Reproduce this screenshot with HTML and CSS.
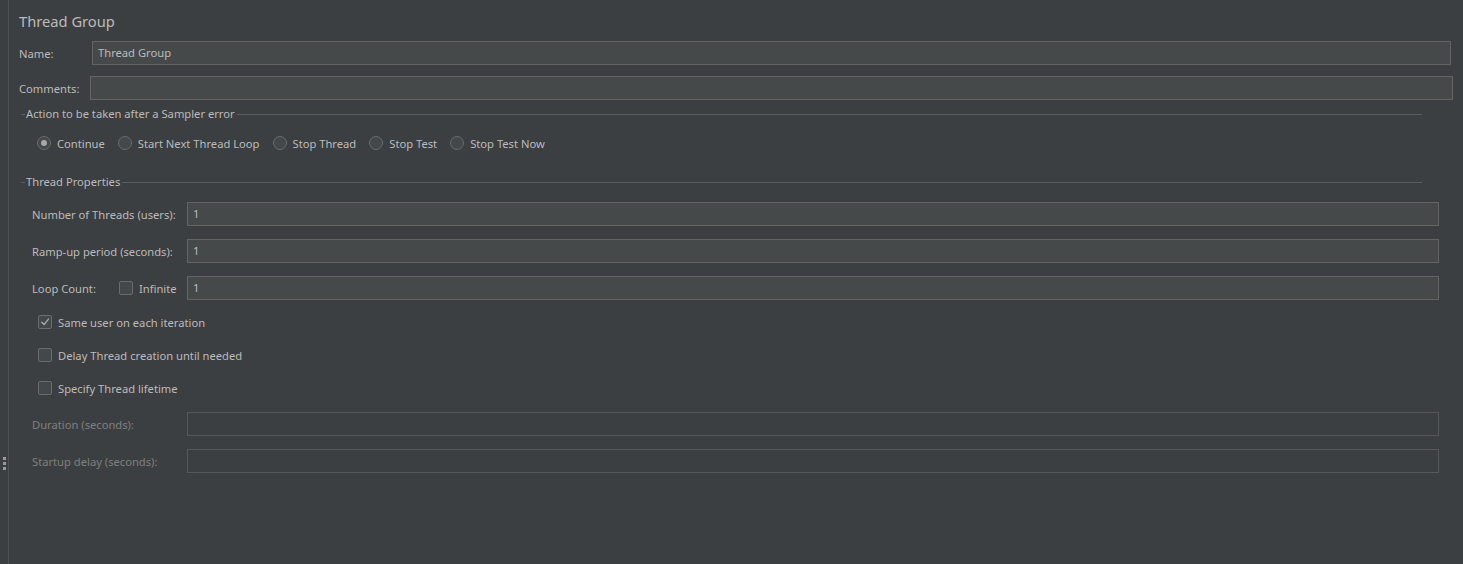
FILE: index.html
```html
<!DOCTYPE html>
<html lang="en">
<head>
<meta charset="utf-8">
<title>Thread Group</title>
<link rel="stylesheet" href="styles.css">
</head>
<body>
<div class="app">
  <div class="gutter">
    <div class="grip"><span></span><span></span><span></span></div>
  </div>
  <main class="panel">
    <h1 class="title">Thread Group</h1>

    <div class="row row-name">
      <label class="lbl lbl-name">Name:</label>
      <div class="field">Thread Group</div>
    </div>
    <div class="row row-comments">
      <label class="lbl lbl-comments">Comments:</label>
      <div class="field"></div>
    </div>

    <section class="group group-action">
      <div class="legend"><span class="tick"></span><span class="legend-text">Action to be taken after a Sampler error</span><span class="rule"></span></div>
      <div class="radios">
        <span class="opt"><span class="radio on"></span>Continue</span>
        <span class="opt"><span class="radio"></span>Start Next Thread Loop</span>
        <span class="opt"><span class="radio"></span>Stop Thread</span>
        <span class="opt"><span class="radio"></span>Stop Test</span>
        <span class="opt"><span class="radio"></span>Stop Test Now</span>
      </div>
    </section>

    <section class="group group-props">
      <div class="legend"><span class="tick"></span><span class="legend-text">Thread Properties</span><span class="rule"></span></div>

      <div class="prop">
        <label class="plabel">Number of Threads (users):</label>
        <div class="field">1</div>
      </div>
      <div class="prop">
        <label class="plabel">Ramp-up period (seconds):</label>
        <div class="field">1</div>
      </div>
      <div class="prop">
        <div class="plabel loop">
          <span class="loop-text">Loop Count:</span>
          <span class="check-opt"><span class="check"></span>Infinite</span>
        </div>
        <div class="field">1</div>
      </div>

      <div class="checks">
        <div class="check-opt"><span class="check on"><svg viewBox="0 0 14 14" width="14" height="14"><path d="M3.2 7.2 L6 10 L11 3.6" fill="none" stroke="#a8a8a8" stroke-width="1.6" stroke-linecap="round" stroke-linejoin="round"/></svg></span>Same user on each iteration</div>
        <div class="check-opt"><span class="check"></span>Delay Thread creation until needed</div>
        <div class="check-opt"><span class="check"></span>Specify Thread lifetime</div>
      </div>

      <div class="prop disabled first-disabled">
        <label class="plabel">Duration (seconds):</label>
        <div class="field"></div>
      </div>
      <div class="prop disabled">
        <label class="plabel">Startup delay (seconds):</label>
        <div class="field"></div>
      </div>
    </section>
  </main>
</div>
</body>
</html>
```

FILE: styles.css
```css
html, body {
  margin: 0;
  padding: 0;
  height: 100%;
  background: #3c3f41;
}

body {
  font-family: "Noto Sans", "Open Sans", sans-serif;
  font-size: 11.2px;
  color: #bbbbbb;
  overflow: hidden;
}

.app {
  display: flex;
  height: 564px;
}

/* split-pane divider on the left */
.gutter {
  width: 9px;
  flex: 0 0 9px;
  border-right: 1px solid #4d5154;
  display: flex;
  flex-direction: column;
  align-items: flex-start;
  padding-top: 457px;
  box-sizing: border-box;
}

.grip {
  display: flex;
  flex-direction: column;
  gap: 2px;
  margin-left: 3px;
}

.grip span {
  width: 3px;
  height: 3px;
  background: #9a9a9a;
}

.panel {
  flex: 1;
  padding: 11px 10px 0 10px;
  box-sizing: border-box;
}

.title {
  margin: 0;
  font-size: 14.7px;
  font-weight: normal;
  line-height: 20px;
  height: 20px;
}

.row {
  display: flex;
  align-items: center;
  height: 24px;
}

.row-name {
  margin-top: 10px;
  margin-right: 2px;
  margin-left: -1px;
}

.row-comments {
  margin-top: 11px;
  margin-left: -1px;
}

.lbl-name { width: 74px; flex: 0 0 74px; padding-left: 1px; box-sizing: border-box; }
.lbl-comments { width: 72px; flex: 0 0 72px; padding-left: 1px; box-sizing: border-box; }

.field {
  flex: 1;
  height: 24px;
  box-sizing: border-box;
  border: 1px solid #646464;
  background: #45494a;
  padding: 0 5px;
  line-height: 22px;
  color: #bbbbbb;
}

/* titled group borders */
.group {
  margin-left: 2px;
  margin-right: 31px;
}

.group-action { margin-top: 6px; }
.group-props { margin-top: 21px; }

.legend {
  display: flex;
  align-items: center;
  height: 16px;
}

.tick {
  width: 4px;
  height: 1px;
  background: #5a5d60;
}

.legend-text {
  padding: 0 2px 0 1px;
  line-height: 16px;
}

.rule {
  flex: 1;
  height: 1px;
  background: #5a5d60;
}

.radios {
  display: flex;
  align-items: center;
  height: 20px;
  margin-top: 11px;
  padding-left: 16px;
}

.opt {
  display: inline-flex;
  align-items: center;
  margin-right: 13px;
}

.radio {
  width: 14px;
  height: 14px;
  box-sizing: border-box;
  border-radius: 50%;
  border: 1px solid #6b6b6b;
  background: #43494a;
  margin-right: 6px;
  display: inline-flex;
  align-items: center;
  justify-content: center;
}

.radio.on::after {
  content: "";
  width: 6px;
  height: 6px;
  border-radius: 50%;
  background: #a9a9a9;
}

.prop {
  display: flex;
  align-items: center;
  height: 24px;
  margin-top: 13px;
  margin-left: 11px;
  margin-right: -17px;
}

.group-props .legend + .prop { margin-top: 12px; }

.plabel {
  width: 155px;
  flex: 0 0 155px;
}

.loop {
  display: flex;
  align-items: center;
}

.loop-text {
  width: 87px;
}

.check-opt {
  display: flex;
  align-items: center;
}

.check {
  width: 14px;
  height: 14px;
  box-sizing: border-box;
  border: 1px solid #6b6b6b;
  border-radius: 2px;
  background: #43494a;
  margin-right: 6px;
  display: inline-flex;
  align-items: center;
  justify-content: center;
}

.check svg { display: block; }

.checks {
  margin-left: 17px;
  margin-top: 12px;
  display: flex;
  flex-direction: column;
  gap: 13px;
}

.checks .check-opt {
  height: 20px;
}

.prop.disabled .plabel { color: #7f7f7f; }

.prop.disabled .field {
  background: #3c3f41;
  border-color: #555759;
}

.first-disabled { margin-top: 14px; }
```
